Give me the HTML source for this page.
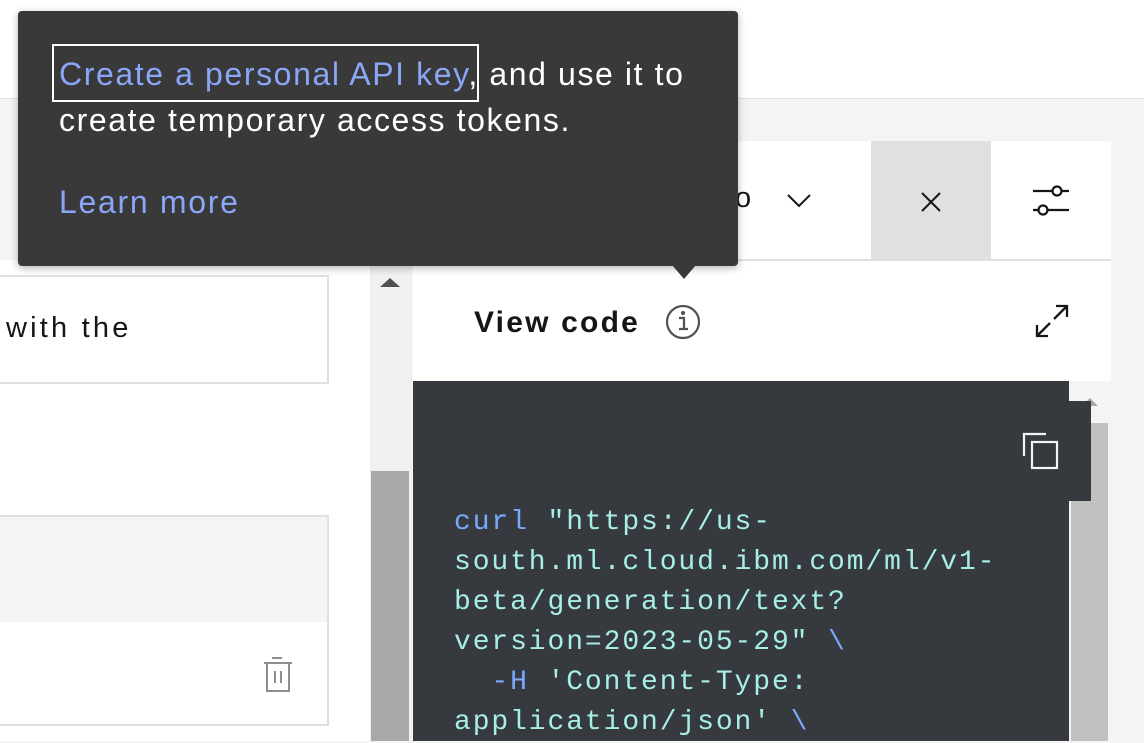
<!DOCTYPE html>
<html><head><meta charset="utf-8"><style>
*{margin:0;padding:0;box-sizing:border-box}
body{width:1144px;height:741px;overflow:hidden;position:relative;background:#f4f4f4;font-family:"Liberation Sans",sans-serif}
.a{position:absolute}
</style></head><body>
<div class="a" style="left:0;top:0;width:1144px;height:99px;background:#fff;border-bottom:1px solid #e0e0e0"></div>
<!-- left area -->
<div class="a" style="left:0;top:260px;width:370px;height:481px;background:#fff"></div>
<div class="a" style="left:-2px;top:275px;width:331px;height:109px;background:#fff;border:2px solid #e0e0e0"></div>
<div class="a" style="left:6px;top:312px;font-size:29px;color:#161616;letter-spacing:3.2px">with the</div>
<div class="a" style="left:-2px;top:515px;width:331px;height:109px;background:#f4f4f4;border:2px solid #e0e0e0"></div>
<div class="a" style="left:-2px;top:622px;width:331px;height:104px;background:#fff;border:2px solid #e0e0e0;border-top:none"></div>
<svg class="a" style="left:262px;top:656px" width="32" height="38" viewBox="0 0 32 38" fill="none" stroke="#8d8d8d" stroke-width="2"><path d="M10 2h10M2 7h28M5 7v28h22V7M13 15v12M19 15v12"/></svg>
<!-- scrollbar -->
<div class="a" style="left:370px;top:260px;width:42px;height:481px;background:#f0f0f0"></div>
<div class="a" style="left:371px;top:471px;width:38px;height:270px;background:#a8a8a8"></div>
<div class="a" style="left:380px;top:278px;width:0;height:0;border-left:10px solid transparent;border-right:10px solid transparent;border-bottom:9px solid #505050"></div>
<!-- right panel -->
<div class="a" style="left:413px;top:141px;width:698px;height:600px;background:#fff"></div>
<div class="a" style="left:413px;top:259px;width:698px;height:2px;background:#e0e0e0"></div>
<div class="a" style="left:871px;top:141px;width:120px;height:119px;background:#e0e0e0"></div>
<div class="a" style="left:735px;top:182px;font-size:29px;color:#161616">o</div>
<svg class="a" style="left:786px;top:192px" width="26" height="18" viewBox="0 0 26 18"><path d="M2 3l11 11L24 3" fill="none" stroke="#161616" stroke-width="2"/></svg>
<svg class="a" style="left:919px;top:190px" width="24" height="24" viewBox="0 0 24 24"><path d="M3 3l18 18M21 3L3 21" stroke="#161616" stroke-width="2"/></svg>
<svg class="a" style="left:1032px;top:184px" width="40" height="34" viewBox="0 0 40 34" fill="none" stroke="#161616" stroke-width="2.2"><path d="M1 7h20M29 7h8M1 26h6M15 26h22"/><circle cx="25" cy="7" r="4.5"/><circle cx="11" cy="26" r="4.5"/></svg>
<div class="a" style="left:474px;top:306px;font-size:30px;font-weight:700;color:#161616;letter-spacing:2.2px">View code</div>
<svg class="a" style="left:665px;top:304px" width="36" height="36" viewBox="0 0 36 36" fill="none" stroke="#525252" stroke-width="2.2"><circle cx="18" cy="18" r="16"/><path d="M14 14h5v11M14 25h9"/><circle cx="18" cy="9" r="1" fill="#525252"/></svg>
<svg class="a" style="left:1033px;top:302px" width="38" height="38" viewBox="0 0 38 38" fill="none" stroke="#161616" stroke-width="2.3"><path d="M23 4h11v11M34 4L21 17M15 34H4V23M4 34l13-13"/></svg>
<!-- code -->
<div class="a" style="left:1069px;top:381px;width:42px;height:360px;background:#f4f4f4"></div>
<div class="a" style="left:1071px;top:423px;width:37px;height:318px;background:#c1c1c1"></div>
<div class="a" style="left:1082px;top:398px;width:0;height:0;border-left:8px solid transparent;border-right:8px solid transparent;border-bottom:8px solid #a8a8a8"></div>
<div class="a" style="left:413px;top:381px;width:656px;height:360px;background:#36393e"></div>
<div class="a" style="left:1060px;top:401px;width:31px;height:100px;background:#36393e"></div>
<svg class="a" style="left:1020px;top:430px" width="42" height="42" viewBox="0 0 42 42" fill="none" stroke="#f4f4f4" stroke-width="2.2"><path d="M4 26V4h22"/><rect x="12" y="12" width="25" height="26"/></svg>
<pre class="a" style="left:454px;top:503px;font-family:'Liberation Mono',monospace;font-size:28px;line-height:40px;letter-spacing:1.9px;color:#a6eee6"><span style="color:#78a9ff">curl</span> "https://us-
south.ml.cloud.ibm.com/ml/v1-
beta/generation/text?
version=2023-05-29" <span style="color:#78a9ff">\</span>
  <span style="color:#78a9ff">-H</span> 'Content-Type:
application/json' <span style="color:#78a9ff">\</span></pre>
<!-- tooltip -->
<div class="a" style="left:18px;top:11px;width:720px;height:255px;background:#393939;border-radius:4px;box-shadow:0 2px 8px rgba(0,0,0,.3)"></div>
<div class="a" style="left:672px;top:265px;width:0;height:0;border-left:12px solid transparent;border-right:12px solid transparent;border-top:14px solid #393939"></div>
<div class="a" style="left:52px;top:44px;width:427px;height:58px;border:2px solid #fff"></div>
<div class="a" style="left:59px;top:51px;font-size:32px;line-height:46px;color:#fff;width:670px;letter-spacing:1.6px"><span style="color:#8aa6f6">Create a personal API key</span>, and use it to<br>create temporary access tokens.</div>
<div class="a" style="left:59px;top:184px;font-size:32px;color:#8aa6f6;letter-spacing:1.7px">Learn more</div>
</body></html>
